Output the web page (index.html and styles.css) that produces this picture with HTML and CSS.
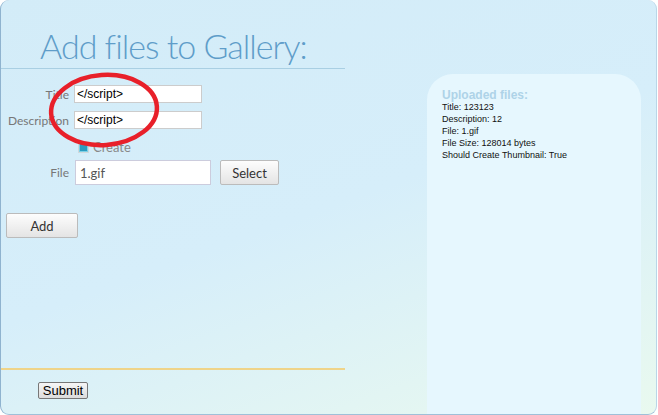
FILE: index.html
```html
<!DOCTYPE html>
<html lang="en">
<head>
    <meta charset="UTF-8">
    <title>Add files to Gallery</title>
    <link rel="stylesheet" href="styles.css">
</head>
<body>
<div class="page">
    <div class="main">
        <h1 class="title">Add files to Gallery:</h1>
        <div class="form">
            <div class="row">
                <label class="lbl">Title</label>
                <input class="txt" type="text" value="&lt;/script&gt;">
            </div>
            <div class="row">
                <label class="lbl">Description</label>
                <input class="txt" type="text" value="&lt;/script&gt;">
            </div>
            <div class="row check">
                <span class="box"></span><span class="chk">Create</span>
            </div>
            <div class="row file">
                <label class="lbl">File</label>
                <input class="fileTxt" type="text" value="1.gif">
                <button class="btn select">Select</button>
            </div>
            <button class="btn add">Add</button>
        </div>
        <div class="bottom">
            <button class="submit">Submit</button>
        </div>
    </div>
    <div class="side">
        <div class="sideHead">Uploaded files:</div>
        <div>Title: 123123</div>
        <div>Description: 12</div>
        <div>File: 1.gif</div>
        <div>File Size: 128014 bytes</div>
        <div>Should Create Thumbnail: True</div>
    </div>
    <svg class="mark" width="120" height="90" viewBox="0 0 120 90">
        <ellipse cx="58" cy="40" rx="53" ry="35" fill="none" stroke="#e8202a" stroke-width="4.5" transform="rotate(-4 58 40)"/>
    </svg>
</div>
</body>
</html>
```

FILE: styles.css
```css
html,body{margin:0;padding:0;background:#fff;}
.page{position:relative;width:655px;height:414px;display:flex;border-left:1px solid #8fb3cf;border-right:1px solid #b9d6e8;border-bottom:1px solid #9fc0d8;border-radius:9px;background:linear-gradient(160deg,#d3ecf8 0%,#d6eefa 50%,#e9f9ef 100%);overflow:hidden;font-family:Lato,"Open Sans",sans-serif;}
.main{width:344px;display:flex;flex-direction:column;}
.title{margin:0;padding:23px 0 0 39px;height:45px;white-space:nowrap;font-family:Lato,sans-serif;font-weight:300;font-size:34px;letter-spacing:-1px;line-height:46px;color:#5f9dc9;border-bottom:1px solid #a9cfe3;}
.form{padding-top:16px;}
.row{display:flex;align-items:center;margin-bottom:8px;}
.lbl{width:68px;text-align:right;font-size:12px;color:#777;padding-right:5px;}
.txt{box-sizing:border-box;width:128px;height:18px;margin:0;padding:0 2px;border:1px solid #ccc;background:#fff;font-family:"Liberation Sans",Arial,sans-serif;font-size:12px;color:#000;}
.check{margin:0 0 6px 77px;padding-top:3px;height:14px;}
.box{width:9px;height:9px;border:1px solid #cfd8dc;background:#2a9cc0;box-shadow:inset 0 0 0 1px #7fd0e6;margin-right:4px;}
.chk{font-size:13px;color:#888;}
.file{margin-top:6px;}
.file .lbl{padding-right:6px;}
.fileTxt{box-sizing:border-box;width:136px;height:25px;margin:0;padding:0 4px;border:1px solid #ccd;background:#fff;font-family:Lato,sans-serif;font-size:13px;color:#555;}
.btn{box-sizing:border-box;height:25px;padding:0;border:1px solid #bbb;border-radius:2px;background:linear-gradient(#fdfdfd,#e4e4e4);font-family:Lato,sans-serif;font-size:13px;color:#333;}
.select{width:59px;margin-left:9px;}
.add{width:72px;margin:20px 0 0 5px;}
.bottom{margin-top:auto;margin-bottom:15px;border-top:2px solid #efd489;padding:9px 0 0 37px;}
.submit{box-sizing:border-box;width:50px;height:17px;padding:0;border:1px solid #777;border-radius:2px;background:linear-gradient(#f6f6f6,#dcdcdc);font-family:"Liberation Sans",Arial,sans-serif;font-size:13px;line-height:13px;color:#000;}
.side{width:199px;margin:74px 0 0 82px;padding:15px 0 0 15px;background:#e6f7fe;border-radius:26px 26px 0 0;font-family:"Liberation Sans",Arial,sans-serif;font-size:9px;line-height:12px;color:#111;}
.sideHead{font-size:12px;font-weight:bold;color:#aed3e8;line-height:12px;}
.mark{position:absolute;left:45px;top:70px;}
```
